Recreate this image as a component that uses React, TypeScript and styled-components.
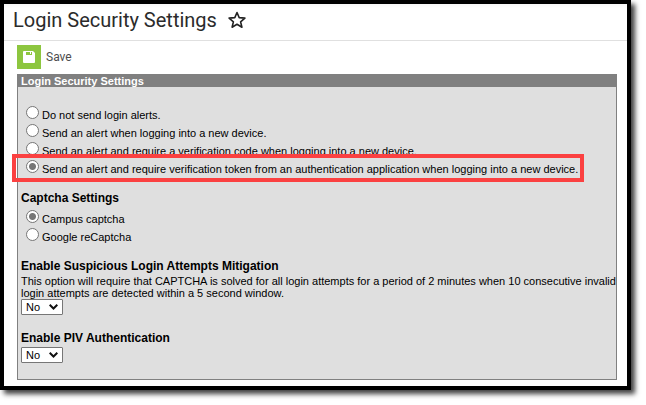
import React from 'react';
import styled, { createGlobalStyle } from 'styled-components';

const GlobalStyle = createGlobalStyle`
  *, *::before, *::after { box-sizing: border-box; }
  body { margin: 0; background: #fff; color: #000; font: 11px/12px "Liberation Sans", Arial, sans-serif; }
`;

const Page = styled.div`
  display: flex;
  min-height: 100vh;
  padding: 0 15px 15px 0;
`;

const Frame = styled.main`
  flex: 1;
  display: flex;
  flex-direction: column;
  border: 4px solid #000;
  background: #fff;
  box-shadow: 4px 4px 5px rgba(0, 0, 0, 0.75);
`;

const Header = styled.header`
  display: flex;
  align-items: center;
  gap: 11px;
  height: 37px;
  padding: 0 9px 4px;
  border-bottom: 1px solid #e0e0e0;
  background: linear-gradient(#f7f7f7, #fff 4px);
`;

const Title = styled.h1`
  margin: 0;
  color: #2b2b2b;
  font: 400 20px/28px Roboto, sans-serif;
`;

const StarButton = styled.button`
  display: flex;
  padding: 0;
  border: 0;
  background: none;
  color: #222;
`;

const Toolbar = styled.div`
  display: flex;
  padding: 4px 13px 5px;
`;

const SaveButton = styled.button`
  display: flex;
  align-items: center;
  gap: 5px;
  padding: 0;
  border: 0;
  background: none;
  color: #4d4d4d;
  font: 12px/24px Roboto, sans-serif;
`;

const SaveIcon = styled.span`
  display: grid;
  place-items: center;
  width: 24px;
  height: 24px;
  background: #8dc63f;
`;

const Panel = styled.section`
  flex: 1;
  margin: 0 10px 6px 13px;
  border: 1px solid #808080;
  background: #dfdfdf;
`;

const PanelTitle = styled.h2`
  margin: 0;
  padding: 0 3px;
  background: #808080;
  color: #fff;
  font-size: 11px;
  line-height: 12px;
`;

const PanelBody = styled.form`
  padding: 16px 0 0 3px;
`;

const Group = styled.fieldset`
  min-width: 0;
  margin: 0;
  padding: 0;
  border: 0;
`;

const Option = styled.label<{ $marked?: boolean }>`
  display: flex;
  align-items: baseline;
  position: relative;
  width: fit-content;
  height: 18px;
  padding-left: 5px;
  white-space: nowrap;

  &::after {
    content: "";
    display: ${({ $marked }) => ($marked ? 'block' : 'none')};
    position: absolute;
    inset: -3px -6px -7px -9px;
    border: 4px solid #fb4141;
  }
`;

const Radio = styled.input`
  flex: none;
  width: 13px;
  height: 13px;
  margin: 3px 3px 0 0;
  appearance: none;
  border: 1px solid #767676;
  border-radius: 50%;
  background: #fff;

  &:checked {
    background: radial-gradient(circle, #767676 3px, #fff 4px);
  }
`;

const Heading = styled.legend`
  display: block;
  padding: 0;
  margin-bottom: 1px;
  font-size: 12px;
  font-weight: bold;
  line-height: 16px;
`;

const CaptchaGroup = styled(Group)`
  margin-top: 15px;
`;

const Field = styled.div`
  margin-top: 15px;
`;

const FieldLabel = styled.label`
  display: block;
  margin-bottom: 1px;
  font-size: 12px;
  font-weight: bold;
  line-height: 16px;
`;

const Hint = styled.p`
  margin: 0;
`;

const SelectBox = styled.span`
  display: grid;
  align-items: center;
  width: 42px;
`;

const Arrow = styled.svg`
  grid-area: 1 / 1;
  justify-self: end;
  margin-right: 5px;
  pointer-events: none;
`;

const Select = styled.select`
  grid-area: 1 / 1;
  width: 100%;
  height: 16px;
  padding: 0 4px;
  border: 1px solid #767676;
  border-radius: 1px;
  appearance: none;
  background: #fff;
  color: #000;
  font: 11px/14px "Liberation Sans", Arial, sans-serif;
`;

const alerts = [
  'Do not send login alerts.',
  'Send an alert when logging into a new device.',
  'Send an alert and require a verification code when logging into a new device.',
  'Send an alert and require verification token from an authentication application when logging into a new device.',
];

const captchas = ['Campus captcha', 'Google reCaptcha'];

function YesNo({ id }: { id: string }) {
  return (
    <SelectBox>
      <Select id={id} defaultValue="No">
        <option>No</option>
        <option>Yes</option>
      </Select>
      <Arrow width="9" height="6" viewBox="0 0 9 6" fill="none" stroke="#111" strokeWidth="2" aria-hidden="true">
        <path d="M.7.8 4.5 4.5 8.3.8" />
      </Arrow>
    </SelectBox>
  );
}

export default function App() {
  return (
    <>
      <GlobalStyle />
      <Page>
        <Frame>
          <Header>
            <Title>Login Security Settings</Title>
            <StarButton type="button" aria-label="Add to favorites">
              <svg width="18" height="18" viewBox="0 0 18 18" fill="none" stroke="currentColor" strokeWidth="1.6" strokeLinejoin="round">
                <path d="m9 1.5 2.2 5.1 5.7.5-4.3 3.7 1.3 5.4L9 13.3l-4.9 2.9 1.3-5.4-4.3-3.7 5.7-.5Z" />
              </svg>
            </StarButton>
          </Header>
          <Toolbar>
            <SaveButton type="submit" form="login-security">
              <SaveIcon>
                <svg width="12" height="12" viewBox="0 0 12 12" aria-hidden="true">
                  <path fill="#fff" d="M1 0h9l2 2v9a1 1 0 0 1-1 1H1a1 1 0 0 1-1-1V1a1 1 0 0 1 1-1Z" />
                  <path fill="#8dc63f" d="M3 1h6v3H3Z" />
                  <path fill="#fff" d="M7 1h1v2H7Z" />
                </svg>
              </SaveIcon>
              Save
            </SaveButton>
          </Toolbar>
          <Panel>
            <PanelTitle>Login Security Settings</PanelTitle>
            <PanelBody id="login-security">
              <Group aria-label="Login alerts">
                {alerts.map((text, i) => (
                  <Option key={text} $marked={i === 3}>
                    <Radio type="radio" name="alert" defaultChecked={i === 3} />
                    {text}
                  </Option>
                ))}
              </Group>
              <CaptchaGroup>
                <Heading>Captcha Settings</Heading>
                {captchas.map((text, i) => (
                  <Option key={text}>
                    <Radio type="radio" name="captcha" defaultChecked={i === 0} />
                    {text}
                  </Option>
                ))}
              </CaptchaGroup>
              <Field>
                <FieldLabel htmlFor="mitigation">Enable Suspicious Login Attempts Mitigation</FieldLabel>
                <Hint>
                  This option will require that CAPTCHA is solved for all login attempts for a period of 2 minutes when 10
                  consecutive invalid login attempts are detected within a 5 second window.
                </Hint>
                <YesNo id="mitigation" />
              </Field>
              <Field>
                <FieldLabel htmlFor="piv">Enable PIV Authentication</FieldLabel>
                <YesNo id="piv" />
              </Field>
            </PanelBody>
          </Panel>
        </Frame>
      </Page>
    </>
  );
}
